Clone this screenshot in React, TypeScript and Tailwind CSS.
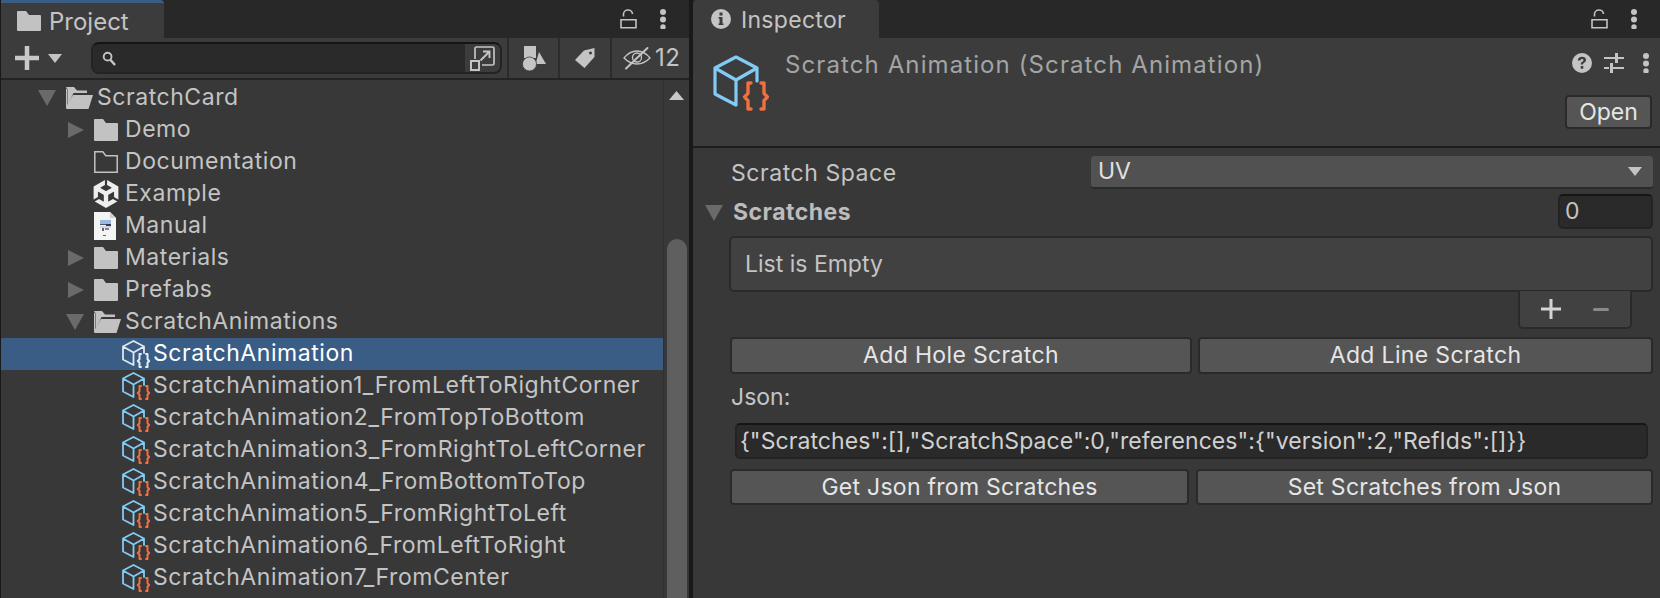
import React from "react";
import { SiUnity } from "react-icons/si";

const Tri = ({ dir, className }: { dir: "r" | "d" | "u"; className: string }) => (
  <svg viewBox="0 0 16 16" preserveAspectRatio="none" className={className}>
    {dir === "r" && <polygon points="0,0 16,8 0,16" fill="currentColor" />}
    {dir === "d" && <polygon points="0,0 16,0 8,16" fill="currentColor" />}
    {dir === "u" && <polygon points="8,0 16,16 0,16" fill="currentColor" />}
  </svg>
);

const Folder = () => (
  <svg viewBox="0 0 24 22" className="w-6 h-[22px] text-[#c2c2c2]">
    <path d="M1 0h8l3 4h11a1 1 0 0 1 1 1v16a1 1 0 0 1-1 1H1a1 1 0 0 1-1-1V1a1 1 0 0 1 1-1z" fill="currentColor" />
  </svg>
);
const FolderEmpty = () => (
  <svg viewBox="0 0 24 22" className="w-6 h-[22px] text-[#c2c2c2]" fill="none" stroke="currentColor" strokeWidth="1.5">
    <path d="M.8 21.2V.8h8l3 4h11.4v16.4z" />
  </svg>
);
const FolderOpen = () => (
  <svg viewBox="0 0 27 22" className="w-[27px] h-[22px] text-[#c2c2c2]">
    <path d="M0 1a1 1 0 0 1 1-1h7l3 3.500h10v2.500H7.500L2 18h-.5V2z M0 2v19l1 0V2z" fill="currentColor" />
    <path d="M7 8h20l-4.500 14H1a1 1 0 0 1-1-1v-1z" fill="currentColor" />
  </svg>
);
const Unity = () => <SiUnity className="w-7 h-7 -ml-[2px] text-[#eeeeee]" />;
const Doc = () => (
  <svg viewBox="0 0 22 28" className="w-[22px] h-7">
    <path d="M0 0h16l6 6v22H0z" fill="#f4f4f4" />
    <path d="M16 0v6h6z" fill="#cfcfcf" />
    <rect x="6" y="8" width="11" height="4" fill="#9db9e2" />
    <rect x="6" y="12" width="6" height="1" fill="#46566e" />
    <rect x="12" y="12" width="5" height="2" fill="#2f3b4c" />
    <rect x="6" y="14" width="11" height="2" fill="#cfd8e2" />
    <rect x="8" y="16" width="2" height="3" fill="#666" />
    <rect x="11" y="16" width="4" height="2" fill="#888" />
    <rect x="9" y="23" width="3" height="1" fill="#666" />
  </svg>
);
const ScriptCube = ({ big, white }: { big?: boolean; white?: boolean }) => {
  const cube = white ? "#dfe6ee" : "#80ccf5";
  const brace = white ? "#e6ecf2" : "#f0703f";
  const sw = big ? 1.6 : 1.8;
  return (
    <svg viewBox="0 0 28 28" className={big ? "w-14 h-14" : "w-7 h-7"} fill="none" strokeLinecap="round" strokeLinejoin="round">
      <path d="M11.500 25 1 19.500V6.500L11.500 1 22 6.500V13M1 6.500l10.500 6 10.500-6M11.500 12.500V25" stroke={cube} strokeWidth={sw} />
      <path d="M19 14h-1.500v5.200L15.800 21l1.700 1.800V27H19M24 14h1.500v5.200l1.700 1.800-1.700 1.800V27H24" stroke={brace} strokeWidth={big ? 1.7 : 2} />
    </svg>
  );
};
const Lock = () => (
  <svg viewBox="0 0 17 20" className="w-[17px] h-5 text-[#c4c4c4]" fill="none" stroke="currentColor" strokeWidth="1.600">
    <path d="M1 10.800h15v8H1zM3.500 7.500V6a4.500 4.500 0 0 1 9-1" />
  </svg>
);
const Dots = () => (
  <svg viewBox="0 0 8 20" className="w-2 h-5 text-[#c4c4c4]" fill="currentColor">
    <circle cx="4" cy="3" r="3" />
    <circle cx="4" cy="10.500" r="3" />
    <circle cx="4" cy="18" r="2.700" />
  </svg>
);

const rows: { label: string; arrow?: "r" | "d"; icon: React.ReactNode; depth: 0 | 1 }[] = [
  { label: "ScratchCard", depth: 0, arrow: "d", icon: <FolderOpen /> },
  { label: "Demo", depth: 1, arrow: "r", icon: <Folder /> },
  { label: "Documentation", depth: 1, icon: <FolderEmpty /> },
  { label: "Example", depth: 1, icon: <Unity /> },
  { label: "Manual", depth: 1, icon: <Doc /> },
  { label: "Materials", depth: 1, arrow: "r", icon: <Folder /> },
  { label: "Prefabs", depth: 1, arrow: "r", icon: <Folder /> },
  { label: "ScratchAnimations", depth: 1, arrow: "d", icon: <FolderOpen /> },
];
const scripts = [
  "ScratchAnimation",
  "ScratchAnimation1_FromLeftToRightCorner",
  "ScratchAnimation2_FromTopToBottom",
  "ScratchAnimation3_FromRightToLeftCorner",
  "ScratchAnimation4_FromBottomToTop",
  "ScratchAnimation5_FromRightToLeft",
  "ScratchAnimation6_FromLeftToRight",
  "ScratchAnimation7_FromCenter",
];

const Btn = ({ children, className }: { children: React.ReactNode; className: string }) => (
  <div className={`flex items-center justify-center rounded-[4px] border-2 border-[#2a2a2a] bg-[#555555] text-[#e6e6e6] text-[23px] ${className}`}>
    {children}
  </div>
);

export default function App() {
  return (
    <div className="font-['Inter','Liberation_Sans',sans-serif] flex w-[1660px] h-[598px] overflow-hidden bg-[#191919] text-[23px] leading-none">
      {/* Project panel */}
      <div className="ml-px w-[688px] flex flex-col shrink-0 bg-[#383838]">
        <div className="h-[38px] flex bg-[#282828] shrink-0">
          <div className="w-[163px] bg-[#3c3c3c] border-t-[3px] border-[#3a5d85] rounded-tr-[4px] flex items-center pl-4 gap-[8px] text-[#c4c4c4]">
            <svg viewBox="0 0 24 20" className="w-6 h-5 text-[#c2c2c2]">
              <path d="M1 0h8l3 4h11a1 1 0 0 1 1 1v14a1 1 0 0 1-1 1H1a1 1 0 0 1-1-1V1a1 1 0 0 1 1-1z" fill="currentColor" />
            </svg>
            <span className="text-[24px] pt-[2px]">Project</span>
          </div>
          <div className="flex-1 flex items-center justify-end gap-[22px] pr-[22px]">
            <Lock />
            <Dots />
          </div>
        </div>
        <div className="h-[42px] flex bg-[#3c3c3c] border-b-2 border-[#232323] shrink-0">
          <div className="flex items-center pl-[14px]">
            <svg viewBox="0 0 24 24" className="w-6 h-6 text-[#c8c8c8]"><path d="M9.750 0h4.500v9.750H24v4.500h-9.750V24h-4.500v-9.750H0v-4.500h9.750z" fill="currentColor" /></svg>
            <Tri dir="d" className="w-[14px] h-[9px] ml-[9px] text-[#c4c4c4]" />
          </div>
          <div className="ml-[29px] mt-[4px] h-[32px] w-[411px] flex rounded-[8px] border-2 border-[#232323] border-t-[#151515] bg-[#2a2a2a] overflow-hidden">
            <div className="flex-1 flex items-center pl-[9px]">
              <svg viewBox="0 0 15 16" className="w-[14px] h-[15px] text-[#c4c4c4]" fill="none" stroke="currentColor" strokeWidth="2"><circle cx="6" cy="6" r="4.200" /><path d="M9 9.500l5 5.500" strokeWidth="2.600" /></svg>
            </div>
            <div className="w-[35px] bg-[#3c3c3c] flex items-center justify-center">
              <svg viewBox="0 0 25 25" className="w-[25px] h-[25px] text-[#c4c4c4]" fill="none" stroke="currentColor" strokeWidth="1.700">
                <path d="M5 13V2.500a1.500 1.500 0 0 1 1.500-1.500h16A1.500 1.500 0 0 1 24 2.500v15a1.500 1.500 0 0 1-1.500 1.500H12" />
                <rect x="1" y="15" width="8" height="9" strokeWidth="2" />
                <path d="M10.500 14.500L19 6M13 5.500h6.500V12" strokeWidth="1.900" />
              </svg>
            </div>
          </div>
          <div className="ml-[5px] w-[2px] bg-[#2b2b2b]" />
          <div className="w-[49px] flex items-center justify-center">
            <svg viewBox="0 0 24 25" className="w-6 h-[25px] text-[#c4c4c4]" fill="currentColor">
              <rect x="2" y="0" width="12" height="12" />
              <polygon points="17,6 24,18 13.500,18" />
              <circle cx="7.500" cy="18" r="7" stroke="#3c3c3c" strokeWidth="0.800" />
            </svg>
          </div>
          <div className="w-[2px] bg-[#2b2b2b]" />
          <div className="w-[50px] flex items-center justify-center">
            <svg viewBox="0 0 20 20" className="w-5 h-5 text-[#c4c4c4]"><path fillRule="evenodd" d="M9 2.500 19.500 0v9L9.500 20 0 12zM15.500 3.500a1.500 1.500 0 1 0 .01 0z" fill="currentColor" /></svg>
          </div>
          <div className="w-[2px] bg-[#2b2b2b]" />
          <div className="flex-1 flex items-center pl-[11px] gap-[4px] text-[#c4c4c4] text-[24px]">
            <svg viewBox="0 0 28 24" className="w-7 h-6" fill="none" stroke="currentColor" strokeWidth="1.300">
              <path d="M1 12c4-5 8-7 13-7s9 2 13 7c-4 4-8 6-13 6s-9-2-13-6z" />
              <circle cx="14" cy="11.500" r="4.500" />
              <path d="M3 22.500 24.500 2" strokeWidth="2" strokeLinecap="round" />
            </svg>
            <span className="tracking-[0.5px]">12</span>
          </div>
        </div>
        <div className="flex-1 flex min-h-0">
          <div className="flex-1 pt-[2px] text-[#c4c4c4] overflow-hidden">
            {rows.map((r) => (
              <div key={r.label} className={`h-8 flex items-center ${r.depth === 0 ? "pl-[39px]" : "pl-[67px]"}`}>
                <div className="w-[26px] shrink-0 flex">
                  {r.arrow === "r" && <Tri dir="r" className="w-4 h-4 text-[#6a6a6a]" />}
                  {r.arrow === "d" && <Tri dir="d" className="-ml-[2px] w-[18px] h-4 text-[#6a6a6a]" />}
                </div>
                <div className="w-[31px] shrink-0 flex items-center">{r.icon}</div>
                <span className="tracking-[0.55px] pb-px">{r.label}</span>
              </div>
            ))}
            {scripts.map((s, i) => (
              <div key={s} className={`h-8 flex items-center pl-[121px] ${i === 0 ? "bg-[#3a5d85] text-white" : ""}`}>
                <div className="w-[31px] shrink-0 flex"><ScriptCube white={i === 0} /></div>
                <span className="tracking-[0.55px] pb-px">{s}</span>
              </div>
            ))}
          </div>
          <div className="w-[26px] shrink-0 flex flex-col items-center border-l border-[#303030] pt-[11px]">
            <Tri dir="u" className="w-[15px] h-[9px] text-[#c8c8c8]" />
            <div className="mt-[139px] flex-1 w-5 rounded-t-[10px] bg-[#5f5f5f]" />
          </div>
        </div>
      </div>

      {/* Inspector */}
      <div className="ml-[4px] flex-1 flex flex-col bg-[#383838]">
        <div className="h-[38px] flex bg-[#282828] shrink-0">
          <div className="w-[186px] bg-[#3c3c3c] rounded-t-[4px] flex items-center pl-[18px] gap-[10px] text-[#c4c4c4]">
            <svg viewBox="0 0 20 20" className="w-5 h-5 text-[#c4c4c4]"><path fillRule="evenodd" d="M10 0a10 10 0 1 1 0 20 10 10 0 0 1 0-20zM8.500 3.500v3h3v-3zM7.500 8v1.500h1v5h-1V16h5v-1.500h-1V8z" fill="currentColor" /></svg>
            <span className="text-[23px] tracking-[0.3px] pt-[3px]">Inspector</span>
          </div>
          <div className="flex-1 flex items-center justify-end gap-[22px] pr-[22px]">
            <Lock />
            <Dots />
          </div>
        </div>
        <div className="h-[110px] bg-[#3c3c3c] border-b-2 border-[#1c1c1c] shrink-0 flex">
          <div className="pl-[20px] pt-[17px]"><ScriptCube big /></div>
          <div className="ml-[16px] pt-[15px] text-[#a4a4a4] text-[24px] tracking-[1.1px] whitespace-nowrap">Scratch Animation (Scratch Animation)</div>
          <div className="flex-1 flex flex-col items-end pr-[8px] pt-[15px]">
            <div className="flex items-center gap-[12px] pr-[2px]">
              <svg viewBox="0 0 20 20" className="w-5 h-5 text-[#c4c4c4]"><path fillRule="evenodd" d="M10 0a10 10 0 1 1 0 20 10 10 0 0 1 0-20zM5.800 7.500h2.700c.1-1 .6-1.500 1.500-1.500s1.400.5 1.400 1.200c0 .7-.5 1-1.200 1.500-1 .7-1.500 1.300-1.500 2.800h2.400c0-.9.300-1.200 1-1.700 1-.7 1.900-1.400 1.900-2.800C14 4.800 12.300 3.800 10 3.800c-2.400 0-4.100 1.200-4.200 3.700zM8.700 13v2.700h2.600V13z" fill="currentColor" /></svg>
              <svg viewBox="0 0 20 20" className="w-5 h-5 text-[#c4c4c4]" fill="currentColor"><path d="M0 4h11v2H0zM11 0h3v10h-3zM14 4h6v2h-6zM0 14h5v2H0zM6 10h3v10H6zM9 14h11v2H9z" /></svg>
              <div className="ml-[6px]"><Dots /></div>
            </div>
            <Btn className="mt-[22px] w-[87px] h-[34px]">Open</Btn>
          </div>
        </div>
        <div className="flex-1 pl-[37px] pr-[7px] text-[#c4c4c4]">
          <div className="h-[33px] mt-[8px] flex items-center">
            <span className="w-[361px] pl-px pt-px shrink-0 tracking-[0.55px]">Scratch Space</span>
            <div className="flex-1 h-full bg-[#515151] border-b-2 border-[#2a2a2a] rounded-[4px] flex items-center justify-between pl-[7px] pr-[11px] text-[#e0e0e0]">
              <span>UV</span>
              <Tri dir="d" className="w-[14px] h-[9px] text-[#c4c4c4]" />
            </div>
          </div>
          <div className="h-[35px] mt-[5px] flex items-center relative">
            <Tri dir="d" className="absolute -left-[25px] top-[11px] w-[18px] h-4 text-[#6a6a6a]" />
            <span className="flex-1 font-bold pl-[3px] pt-px text-[#bcbcbc] tracking-[0.5px]">Scratches</span>
            <div className="w-[95px] h-full rounded-[5px] border-2 border-[#232323] border-t-[#151515] bg-[#2a2a2a] flex items-center pl-[5px]">0</div>
          </div>
          <div className="-ml-px mt-[7px] h-[56px] rounded-[5px] border-2 border-[#2a2a2a] bg-[#414141] flex items-center pl-[14px]">List is Empty</div>
          <div className="flex justify-end pr-[21px]">
            <div className="w-[114px] h-[38px] -mt-[1px] bg-[#414141] border-2 border-t-0 border-[#2a2a2a] rounded-b-[5px] flex items-center">
              <svg viewBox="0 0 20 20" className="ml-[21px] w-5 h-5 text-[#d4d4d4]" fill="currentColor"><path d="M8.500 0h3v8.500H20v3h-8.500V20h-3v-8.500H0v-3h8.500z" /></svg>
              <div className="ml-[32px] w-4 h-[3px] rounded-sm bg-[#8a8a8a]" />
            </div>
          </div>
          <div className="mt-[8px] flex gap-[6px] tracking-[0.35px]">
            <Btn className="w-[462px] h-[37px]">Add Hole Scratch</Btn>
            <Btn className="flex-1 h-[37px]">Add Line Scratch</Btn>
          </div>
          <div className="mt-[14px] pl-px h-[18px] flex items-center">Json:</div>
          <div className="mt-[17px] ml-[5px] mr-[5px] h-[36px] rounded-[5px] border-2 border-[#232323] border-t-[#151515] bg-[#2a2a2a] flex items-center pl-[3px] text-[#d0d0d0] whitespace-nowrap overflow-hidden tracking-[0.07px]">
            {'{"Scratches":[],"ScratchSpace":0,"references":{"version":2,"RefIds":[]}}'}
          </div>
          <div className="mt-[10px] flex gap-[7px] tracking-[0.27px]">
            <Btn className="w-[459px] h-[36px]">Get Json from Scratches</Btn>
            <Btn className="flex-1 h-[36px]">Set Scratches from Json</Btn>
          </div>
        </div>
      </div>
    </div>
  );
}
